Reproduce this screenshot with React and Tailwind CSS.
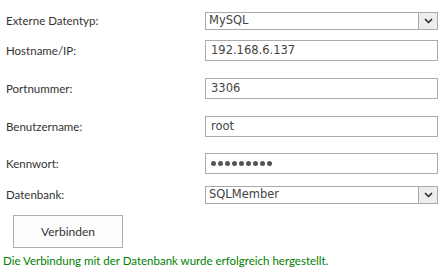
import React from 'react';

const labelFont = { fontFamily: 'Lato, "Open Sans", sans-serif' };

// Select box drawn like the old IE dropdown
const SelectBox = ({ value }) => (
  <div className="flex h-[18px] w-[233px] items-stretch border border-[#a9a9a9] bg-white">
    <div className="flex flex-1 items-center pl-[3px] text-[11.5px] text-[#444] font-['DejaVu_Sans',sans-serif]">
      {value}
    </div>
    <div className="flex w-[19px] items-center justify-center border-l border-[#a9a9a9] bg-[#ededed]">
      <svg width="9" height="6" viewBox="0 0 9 6">
        <path d="M1 1 L4.5 4.5 L8 1" fill="none" stroke="#222" strokeWidth="1.5" />
      </svg>
    </div>
  </div>
);

const TextBox = ({ value, dots }) => (
  <div className="flex h-[21px] w-[233px] items-center border border-[#ababab] bg-white pl-[5px] text-[11.5px] text-[#444] font-['DejaVu_Sans',sans-serif]">
    {dots ? (
      <span className="flex gap-[2px]">
        {Array.from({ length: 9 }).map((_, i) => (
          <span key={i} className="block h-[5px] w-[5px] rounded-full bg-[#555]" />
        ))}
      </span>
    ) : (
      value
    )}
  </div>
);

const Row = ({ label, top, children }) => (
  <div className={`flex items-center ${top}`}>
    <div className="w-[205px] pl-[6px] text-[11.5px] text-[#333]" style={labelFont}>
      {label}
    </div>
    {children}
  </div>
);

const App = () => {
  return (
    <div className="h-[278px] w-[445px] bg-white">
      <div className="pt-[12px]">
        <Row label="Externe Datentyp:" top="">
          <SelectBox value="MySQL" />
        </Row>
        <Row label="Hostname/IP:" top="mt-[10px]">
          <TextBox value="192.168.6.137" />
        </Row>
        <Row label="Portnummer:" top="mt-[17px]">
          <TextBox value="3306" />
        </Row>
        <Row label="Benutzername:" top="mt-[17px]">
          <TextBox value="root" />
        </Row>
        <Row label="Kennwort:" top="mt-[16px]">
          <TextBox dots />
        </Row>
        <Row label="Datenbank:" top="mt-[12px]">
          <SelectBox value="SQLMember" />
        </Row>
      </div>
      <div className="mt-[11px] pl-[13px]">
        <button
          type="button"
          className="h-[33px] w-[110px] border border-[#adadad] bg-[#fdfdfd] text-[12px] text-[#333]"
          style={labelFont}
        >
          Verbinden
        </button>
      </div>
      <p className="mt-[4px] pl-[3px] text-[11.5px] text-[#008000]" style={labelFont}>
        Die Verbindung mit der Datenbank wurde erfolgreich hergestellt.
      </p>
    </div>
  );
};

export default App;
